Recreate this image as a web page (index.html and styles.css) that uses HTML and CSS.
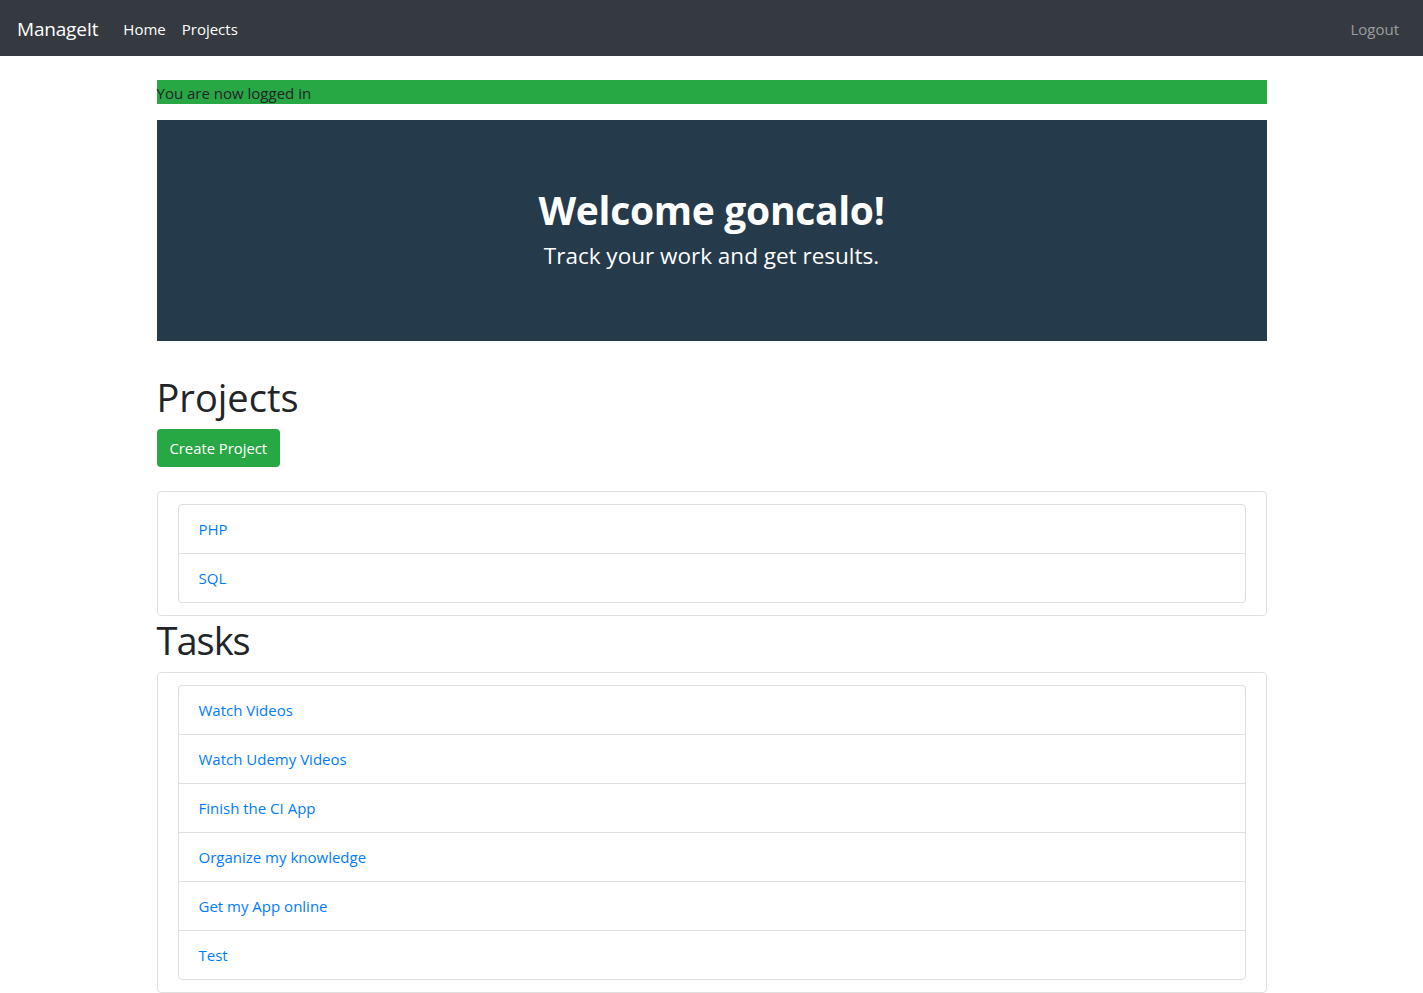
FILE: index.html
```html
<!DOCTYPE html>
<html>
<head>
<meta charset="utf-8">
<link rel="stylesheet" href="styles.css">
</head>
<body>
<nav class="navbar">
  <div class="nav-left">
    <a class="brand">ManageIt</a>
    <a class="nav-link active">Home</a>
    <a class="nav-link active">Projects</a>
  </div>
  <a class="nav-link muted">Logout</a>
</nav>
<main class="container">
  <div class="alert">You are now logged in</div>
  <section class="jumbotron">
    <h1 class="jt-title">Welcome goncalo!</h1>
    <p class="jt-lead">Track your work and get results.</p>
  </section>
  <h1 class="section-title">Projects</h1>
  <a class="btn">Create Project</a>
  <div class="card projects-card">
    <ul class="list-group">
      <li class="list-item"><a>PHP</a></li>
      <li class="list-item"><a>SQL</a></li>
    </ul>
  </div>
  <h1 class="section-title tasks-title">Tasks</h1>
  <div class="card">
    <ul class="list-group">
      <li class="list-item"><a>Watch Videos</a></li>
      <li class="list-item"><a>Watch Udemy Videos</a></li>
      <li class="list-item"><a>Finish the CI App</a></li>
      <li class="list-item"><a>Organize my knowledge</a></li>
      <li class="list-item"><a>Get my App online</a></li>
      <li class="list-item"><a>Test</a></li>
    </ul>
  </div>
</main>
</body>
</html>
```
FILE: styles.css
```css
* { box-sizing: border-box; }
html, body { margin: 0; padding: 0; }
body {
  font-family: "Open Sans", "Noto Sans", sans-serif;
  font-size: 15px;
  line-height: 24px;
  color: #212529;
  background: #fff;
}
.navbar {
  height: 56px;
  background: #343a40;
  display: flex;
  align-items: center;
  justify-content: space-between;
  padding: 2px 16px 0 17px;
}
.nav-left { display: flex; align-items: center; }
.brand {
  color: #fff;
  font-size: 19px;
  margin-right: 17px;
  letter-spacing: -0.2px;
}
.nav-link {
  color: #fff;
  font-size: 15px;
  padding: 0 8px;
}
.nav-link.muted { color: rgba(255,255,255,0.5); padding: 0 8px; }
.container {
  width: 1110px;
  margin: 0 auto;
  padding-top: 24px;
}
.alert {
  background: #28a745;
  color: #212529;
  height: 24px;
  line-height: 26px;
  margin-bottom: 16px;
}
.jumbotron {
  background: #253a4b;
  height: 221px;
  color: #fff;
  text-align: center;
  padding-top: 64px;
  margin-bottom: 32px;
}
.jt-title {
  margin: 0;
  font-size: 39px;
  font-weight: 700;
  line-height: 52px;
  letter-spacing: -0.3px;
}
.jt-lead {
  margin: 0;
  padding-top: 3px;
  font-size: 22.5px;
  line-height: 34px;
}
.section-title {
  margin: 0 0 8px;
  font-size: 38px;
  font-weight: 400;
  line-height: 48px;
}
.tasks-title { margin-bottom: 8px; letter-spacing: -1px; }
.btn {
  display: inline-block;
  background: #28a745;
  color: #fff;
  border-radius: 4px;
  height: 38px;
  line-height: 38px;
  padding: 0 13px;
  font-size: 14.8px;
  margin-bottom: 24px;
}
.card {
  border: 1px solid #dfdfdf;
  border-radius: 4px;
  padding: 12px 20px;
}
.list-group {
  list-style: none;
  margin: 0;
  padding: 0;
  border: 1px solid #dfdfdf;
  border-radius: 4px;
}
.list-item {
  height: 49px;
  padding: 12px 20px;
  border-top: 1px solid #dfdfdf;
}
.list-item:first-child { border-top: none; height: 48px; }
.list-item a { color: #007bff; }
```
